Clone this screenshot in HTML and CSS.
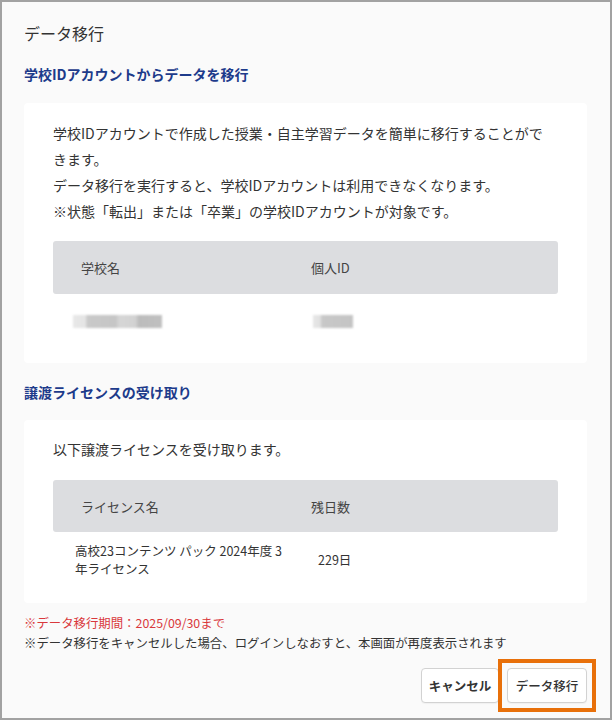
FILE: index.html
```html
<!DOCTYPE html>
<html lang="ja">
<head>
<meta charset="utf-8">
<title>データ移行</title>
<link rel="stylesheet" href="styles.css">
</head>
<body>
<div class="frame">
  <h1 class="title">データ移行</h1>

  <h2 class="section-heading">学校IDアカウントからデータを移行</h2>
  <section class="card card-first">
    <p class="card-text">学校IDアカウントで作成した授業・自主学習データを簡単に移行することができます。<br>データ移行を実行すると、学校IDアカウントは利用できなくなります。<br>※状態「転出」または「卒業」の学校IDアカウントが対象です。</p>
    <table class="info-table">
      <thead>
        <tr><th class="col-a">学校名</th><th class="col-b">個人ID</th></tr>
      </thead>
      <tbody>
        <tr class="row-school">
          <td class="cell-a"><span class="blur blur-school"></span></td>
          <td class="cell-b"><span class="blur blur-id"></span></td>
        </tr>
      </tbody>
    </table>
  </section>

  <h2 class="section-heading heading-second">譲渡ライセンスの受け取り</h2>
  <section class="card card-second">
    <p class="card-text">以下譲渡ライセンスを受け取ります。</p>
    <table class="info-table">
      <thead>
        <tr><th class="col-a">ライセンス名</th><th class="col-b">残日数</th></tr>
      </thead>
      <tbody>
        <tr class="row-license">
          <td class="cell-a license-name">高校23コンテンツ パック 2024年度 3<br>年ライセンス</td>
          <td class="cell-b license-days">229日</td>
        </tr>
      </tbody>
    </table>
  </section>

  <div class="notes">
    <p class="note note-red">※データ移行期間：2025/09/30まで</p>
    <p class="note">※データ移行をキャンセルした場合、ログインしなおすと、本画面が再度表示されます</p>
  </div>

  <div class="actions">
    <button class="btn btn-cancel" type="button">キャンセル</button>
    <span class="highlight"><button class="btn btn-migrate" type="button">データ移行</button></span>
  </div>
</div>
</body>
</html>
```

FILE: styles.css
```css
* {
  box-sizing: border-box;
}

html, body {
  margin: 0;
  padding: 0;
}

body {
  font-family: "Noto Sans CJK JP", "Noto Sans", sans-serif;
  color: #333333;
  background: #fafafa;
}

.frame {
  width: 612px;
  height: 720px;
  border: 2px solid #a2a2a2;
  background: #fafafa;
  padding: 0 23px 0 22px;
  display: flex;
  flex-direction: column;
  overflow: hidden;
}

.title {
  margin: 19px 0 0 0;
  font-size: 16px;
  line-height: 24px;
  font-weight: 400;
  color: #333333;
}

.section-heading {
  margin: 18px 0 0 0;
  font-size: 14px;
  line-height: 22px;
  font-weight: 700;
  color: #1d3b8b;
}

.card {
  background: #ffffff;
  border-radius: 4px;
  padding: 17px 29px 15px 29px;
}

.card-first {
  margin-top: 18px;
}

.card-second {
  margin-top: 17px;
  padding-top: 16px;
}

.card-text {
  margin: 0;
  padding-right: 10px;
  font-size: 14px;
  line-height: 26px;
  color: #333333;
}

.info-table {
  width: 100%;
  border-collapse: separate;
  border-spacing: 0;
  margin-top: 17px;
}

.card-second .info-table {
  margin-top: 18px;
}

.info-table th {
  background: #dcdde0;
  height: 53px;
  text-align: left;
  font-weight: 400;
  font-size: 13px;
  color: #444444;
  padding: 0;
}

.card-second .info-table th {
  height: 52px;
}

.info-table th.col-a {
  width: 258px;
  padding-left: 28px;
  border-radius: 3px 0 0 3px;
}

.info-table th.col-b {
  border-radius: 0 3px 3px 0;
}

.info-table td {
  padding: 0;
  vertical-align: middle;
}

.row-school td {
  height: 54px;
}

.row-school .cell-a {
  padding-left: 20px;
}

.row-school .cell-b {
  padding-left: 2px;
}

.blur {
  display: block;
  height: 13px;
  filter: blur(1px);
  margin-top: 1px;
}

.blur-school {
  width: 89px;
  background: linear-gradient(90deg, #e8e8e8 0%, #e4e4e4 14%, #c9c9c9 16%, #c6c6c6 48%, #d6d6d6 52%, #d2d2d2 70%, #bcbcbc 74%, #c0c0c0 100%);
}

.blur-id {
  width: 40px;
  background: linear-gradient(90deg, #e6e6e6 0%, #e2e2e2 18%, #c8c8c8 22%, #c4c4c4 100%);
}

.row-license td {
  height: 56px;
  font-size: 12.5px;
  line-height: 18px;
  color: #333333;
}

.row-license .license-name {
  padding-left: 22px;
}

.row-license .license-days {
  padding-left: 7px;
}

.notes {
  margin-top: 10px;
}

.note {
  margin: 0;
  font-size: 12.4px;
  line-height: 20px;
  color: #333333;
  white-space: nowrap;
}

.note-red {
  color: #d9383c;
}

.actions {
  margin-top: 15px;
  display: flex;
  justify-content: flex-end;
  align-items: center;
  gap: 8px;
}

.highlight {
  display: block;
  border: 4px solid #e8700a;
  padding: 5px;
  margin: -9px -9px -9px 0;
  margin-left: -9px;
}

.btn {
  display: block;
  height: 35px;
  padding: 0;
  background: #ffffff;
  border: 1px solid #d2d2d2;
  border-radius: 4px;
  font-family: "Noto Sans CJK JP", "Noto Sans", sans-serif;
  font-size: 12.5px;
  color: #333333;
  white-space: nowrap;
  box-shadow: 0 1px 1px rgba(0, 0, 0, 0.04);
}

.btn-cancel {
  width: 78px;
  font-weight: 700;
}

.btn-migrate {
  width: 80px;
  font-weight: 500;
}
```
